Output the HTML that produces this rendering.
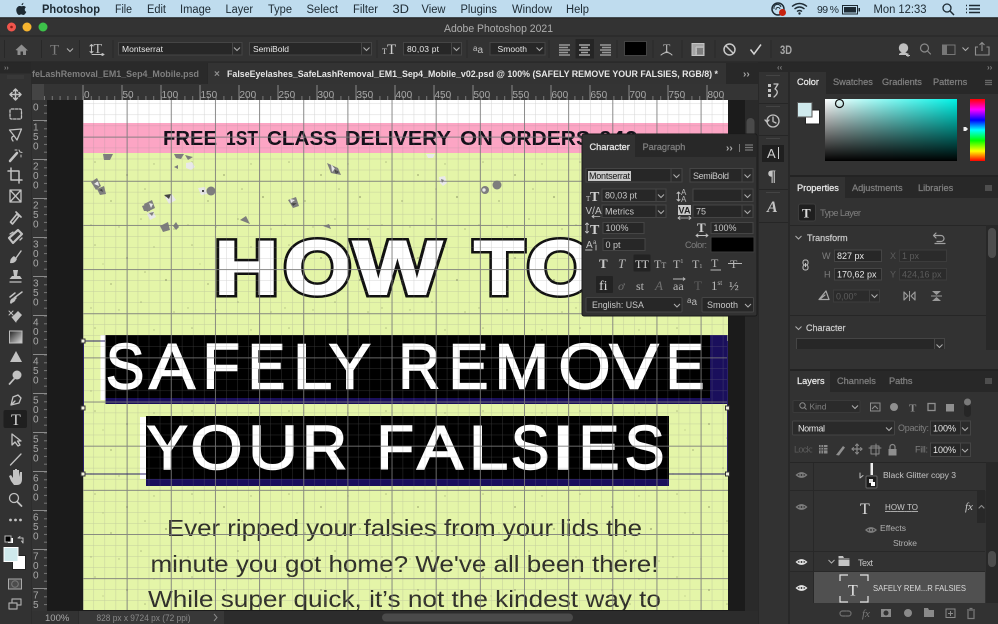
<!DOCTYPE html>
<html lang="en"><head><meta charset="utf-8"><title>Adobe Photoshop 2021</title>
<style>
html,body{margin:0;padding:0;background:#323232;width:998px;height:624px;overflow:hidden}
svg{display:block;position:absolute;left:0;top:0}
text{font-family:"Liberation Sans",sans-serif;font-size:9px;fill:#c4c4c4}
.b{font-weight:bold}
.d{fill:#7f7f7f}
.dd{fill:#5c5c5c}
.w{fill:#e8e8e8}
.m{font-size:11.5px;fill:#1d2a33}
.r{font-size:10px;fill:#a8a8a8}
.f{fill:#272727;stroke:#454545;stroke-width:1}
.s{fill:#2b2b2b;stroke:#454545}
.i{fill:none;stroke:#c2c2c2;stroke-width:1.3;stroke-linecap:round;stroke-linejoin:round}
.id{fill:none;stroke:#8a8a8a;stroke-width:1.2;stroke-linecap:round;stroke-linejoin:round}
.fl{fill:#c2c2c2}
.fd{fill:#8a8a8a}
.g{fill:#7d7d7d}
.gl{fill:#e9e9e9}
.gd{fill:#444}
.tw{fill:#e8e8e8;stroke:#e8e8e8;stroke-width:.25px;font-size:9.2px}
.td{fill:#7f7f7f;stroke:#7f7f7f;stroke-width:.25px;font-size:9.2px}
.big{fill:#fff;stroke:#fff;stroke-width:1.5px;font-size:64px}
.big2{fill:#fff;stroke:#fff;stroke-width:1.5px;font-size:62px}
.hb{font-size:76px;font-weight:bold;fill:#111;stroke:#111;stroke-width:7px;stroke-linejoin:miter}
.hf{font-size:76px;font-weight:bold;fill:#fff;stroke:#fff;stroke-width:2px;stroke-linejoin:miter}
.fs{font-size:20.5px;font-weight:bold;fill:#14101a}
.bd{font-size:23px;fill:#30302a}
</style></head><body>
<svg width="998" height="624" viewBox="0 0 998 624" xmlns="http://www.w3.org/2000/svg">
<defs>
<path id="c" d="M-3 -1.5L0 1.5L3 -1.5" fill="none" stroke="#b0b0b0" stroke-width="1"/>
<pattern id="minor" x="82.5" y="92.5" width="11.04" height="11.04" patternUnits="userSpaceOnUse"><path d="M0 0H11.04M0 0V11.04" stroke="#8c8c8c" stroke-opacity=".36" stroke-width="1" fill="none"/></pattern>
<pattern id="major" x="82.5" y="92.5" width="44.15" height="44.15" patternUnits="userSpaceOnUse"><path d="M0 .5H44.15M.5 0V44.15" stroke="#777" stroke-opacity=".82" stroke-width="1" fill="none"/></pattern>
<pattern id="speck" x="83" y="153" width="97" height="83" patternUnits="userSpaceOnUse"><g fill="#8f9a68" fill-opacity=".6"><circle cx="12" cy="9" r=".8"/><circle cx="44" cy="22" r="1"/><circle cx="71" cy="11" r=".7"/><circle cx="28" cy="48" r=".9"/><circle cx="83" cy="44" r="1.1"/><circle cx="58" cy="66" r=".8"/><circle cx="8" cy="72" r=".7"/><circle cx="91" cy="76" r=".8"/><circle cx="36" cy="74" r=".7"/><circle cx="62" cy="36" r=".8"/><circle cx="20" cy="28" r=".6"/></g></pattern>
<pattern id="htick" x="83" y="0" width="7.8" height="100" patternUnits="userSpaceOnUse"><path d="M.5 96V100" stroke="#777"/></pattern>
<pattern id="vtick" x="0" y="120.5" width="48" height="7.8" patternUnits="userSpaceOnUse"><path d="M44 .5H48" stroke="#777"/></pattern>
<linearGradient id="gh" x1="0" x2="1" y1="0" y2="0"><stop offset="0" stop-color="#fff"/><stop offset="1" stop-color="#00f2e6"/></linearGradient>
<linearGradient id="gv" x1="0" x2="0" y1="0" y2="1"><stop offset="0" stop-color="#000" stop-opacity="0"/><stop offset="1" stop-color="#000"/></linearGradient>
<linearGradient id="hue" x1="0" x2="0" y1="0" y2="1"><stop offset="0" stop-color="#f00"/><stop offset=".17" stop-color="#f0f"/><stop offset=".34" stop-color="#00f"/><stop offset=".5" stop-color="#0ff"/><stop offset=".67" stop-color="#0f0"/><stop offset=".84" stop-color="#ff0"/><stop offset="1" stop-color="#f00"/></linearGradient>
<linearGradient id="tg" x1="0" x2="1" y1="0" y2="1"><stop offset="0" stop-color="#222"/><stop offset="1" stop-color="#ddd"/></linearGradient>
<clipPath id="cv"><rect x="83" y="100" width="645" height="510"/></clipPath>
<path id="eye" d="M-5 0Q0 -4.5 5 0Q0 4.5 -5 0Z M-1.6 0A1.6 1.6 0 1 0 1.6 0A1.6 1.6 0 1 0 -1.6 0Z" fill="none" stroke-width="1.3"/>
</defs>

<!-- window -->
<rect width="998" height="624" fill="#323232"/>
<!-- menu bar -->
<rect width="998" height="17.5" fill="#bfdcee"/>
<path d="M21.5 4.2Q22.5 3.2 23.4 2.8Q23.5 4.2 22.6 5Q21.8 5.5 21.5 4.2ZM17.2 7.4C18.8 5.3 20.7 6.2 21.6 6.2C22.5 6.2 24.3 5.2 25.9 7.2C24.2 8.4 24.4 11 26.3 11.9C25.6 13.5 24.4 15.2 23.2 15C22.4 14.9 22 14.4 21.2 14.4C20.4 14.4 20 15 19.1 15C17.3 15 15 9.9 17.2 7.4Z" fill="#1d2a33"/>
<text class="m b" x="42" y="13" textLength="58" lengthAdjust="spacingAndGlyphs">Photoshop</text>
<text class="m" x="115" y="13" textLength="17" lengthAdjust="spacingAndGlyphs">File</text>
<text class="m" x="147" y="13" textLength="19" lengthAdjust="spacingAndGlyphs">Edit</text>
<text class="m" x="180" y="13" textLength="31" lengthAdjust="spacingAndGlyphs">Image</text>
<text class="m" x="225.5" y="13" textLength="27.5" lengthAdjust="spacingAndGlyphs">Layer</text>
<text class="m" x="268" y="13" textLength="24" lengthAdjust="spacingAndGlyphs">Type</text>
<text class="m" x="306.5" y="13" textLength="31.5" lengthAdjust="spacingAndGlyphs">Select</text>
<text class="m" x="353" y="13" textLength="25" lengthAdjust="spacingAndGlyphs">Filter</text>
<text class="m" x="392.5" y="13" textLength="16.5" lengthAdjust="spacingAndGlyphs">3D</text>
<text class="m" x="421.5" y="13" textLength="24" lengthAdjust="spacingAndGlyphs">View</text>
<text class="m" x="460.5" y="13" textLength="36.5" lengthAdjust="spacingAndGlyphs">Plugins</text>
<text class="m" x="512" y="13" textLength="40" lengthAdjust="spacingAndGlyphs">Window</text>
<text class="m" x="566" y="13" textLength="23" lengthAdjust="spacingAndGlyphs">Help</text>
<circle cx="778" cy="9" r="6" fill="none" stroke="#1d2a33" stroke-width="1.5"/><path d="M774 9A3.5 3.5 0 0 1 781 7M776 10A2 2 0 0 1 780 9" fill="none" stroke="#1d2a33"/>
<circle cx="782.5" cy="12.5" r="3.5" fill="#c8220f"/>
<path d="M792 6.5Q799.5 .5 807 6.5M794.5 9Q799.5 5 804.5 9M797 11.5Q799.5 9.5 802 11.5" fill="none" stroke="#1d2a33" stroke-width="1.4"/><circle cx="799.5" cy="13.5" r="1.2" fill="#1d2a33"/>
<text class="m" style="font-size:10.5px" x="817" y="13" textLength="22">99 %</text>
<rect x="842.5" y="5.5" width="15" height="8.5" fill="none" stroke="#1d2a33"/><rect x="844" y="7" width="12" height="5.5" fill="#1d2a33"/><rect x="858.5" y="8" width="1.5" height="3.5" fill="#1d2a33"/>
<text class="m" x="873.5" y="13" textLength="53" lengthAdjust="spacingAndGlyphs">Mon 12:33</text>
<circle cx="947" cy="8" r="4" fill="none" stroke="#1d2a33" stroke-width="1.3"/><path d="M950 11L954 15" stroke="#1d2a33" stroke-width="1.5"/>
<path d="M969 5.5H980M969 9H980M969 12.5H980M966 5.5H967M966 9H967M966 12.5H967" stroke="#1d2a33" stroke-width="1.4"/>

<!-- title bar -->
<rect x="0" y="18" width="998" height="18" rx="4" fill="#333"/>
<path d="M0 17.8H998" stroke="#1c1c1c"/>
<circle cx="11.5" cy="27" r="4.5" fill="#f0554c"/><circle cx="11.5" cy="27" r="1.3" fill="#8a1d16"/>
<circle cx="27" cy="27" r="4.5" fill="#f6b42f"/>
<circle cx="43" cy="27" r="4.5" fill="#3dc24a"/>
<text x="444" y="32" style="font-size:11px;fill:#aeaeae" textLength="109" lengthAdjust="spacingAndGlyphs">Adobe Photoshop 2021</text>
<!-- options bar -->
<path d="M0 36H998" stroke="#262626"/>
<rect y="36.5" width="998" height="26" fill="#333"/>
<path d="M0 62H998" stroke="#262626"/>
<path d="M4.5 40V58M41.5 40V58M79.5 40V58M113 40V58M377 40V58M467 40V58M549 40V58M617 40V58M653 40V58M682 40V58M715 40V58M771 40V58" stroke="#282828"/>
<path d="M15.5 50L21.5 44.5L28 50.5H26V55H23V51.5H20.5V55H17.5V50.5Z" fill="#8e8e8e"/>
<text x="50" y="54.5" style="font-size:15px;fill:#7e7e7e;font-family:'Liberation Serif',serif">T</text>
<use href="#c" x="70" y="50"/>
<text x="93.5" y="53" style="font-size:14px;fill:#c0c0c0;font-family:'Liberation Serif',serif">T</text>
<path d="M91.5 44.5V53M90 46L91.5 44.5L93 46M90 51.5L91.5 53L93 51.5M92 54.5H103M102 53.5L104 54.5L102 55.5" class="i" style="stroke-width:1"/>
<rect class="f" x="118.5" y="42.5" width="114" height="12.5"/><rect class="s" x="232.5" y="42.5" width="9.5" height="12.5"/><use href="#c" x="237" y="49"/>
<text class="w" x="122" y="52" style="font-size:8.5px" textLength="41">Montserrat</text>
<rect class="f" x="249.5" y="42.5" width="112" height="12.5"/><rect class="s" x="361.5" y="42.5" width="10" height="12.5"/><use href="#c" x="366.5" y="49"/>
<text class="w" x="253" y="52" style="font-size:8.5px" textLength="36">SemiBold</text>
<text x="387" y="54" style="font-size:15px;fill:#d0d0d0;font-family:'Liberation Serif',serif">T</text><text x="382" y="54" style="font-size:8px;fill:#d0d0d0;font-family:'Liberation Serif',serif">T</text>
<rect class="f" x="403.5" y="42.5" width="48" height="12.5"/><rect class="s" x="451.5" y="42.5" width="10" height="12.5"/><use href="#c" x="456.5" y="49"/>
<text class="w" x="407" y="52" style="font-size:8.5px" textLength="32">80,03 pt</text>
<text x="473" y="51" style="font-size:8px;fill:#c0c0c0">a</text><text x="477.5" y="53" style="font-size:10px;fill:#c0c0c0">a</text>
<rect class="f" x="490" y="42.5" width="55" height="12.5"/><use href="#c" x="539.5" y="49"/>
<text class="w" x="497.5" y="52" style="font-size:8.5px" textLength="29.5">Smooth</text>
<path d="M559 45H570M559 47.5H568M559 50H570M559 52.5H568M559 55H570" stroke="#9a9a9a" stroke-width="1.4"/>
<rect x="575.5" y="39" width="18.5" height="19.5" fill="#252525"/>
<path d="M579 45H590M581 47.5H588M579 50H590M581 52.5H588M579 55H590" stroke="#a5a5a5" stroke-width="1.4"/>
<path d="M600 45H611M602 47.5H611M600 50H611M602 52.5H611M600 55H611" stroke="#9a9a9a" stroke-width="1.4"/>
<rect x="624.5" y="41.5" width="22" height="14" fill="#000" stroke="#444"/>
<text x="663" y="52" style="font-size:12px;fill:#bcbcbc;font-family:'Liberation Serif',serif">T</text><path d="M661 55Q667 50 672 55" class="i" style="stroke-width:1"/>
<path d="M692 43.5H704V55.5H692ZM692 43.5V46M696 47H704M696 47V55.5M696 50H704M696 53H704" fill="#a5a5a5" stroke="#c4c4c4" stroke-width="1"/><rect x="697" y="48" width="6" height="6.5" fill="#7e7e7e"/>
<circle cx="729.5" cy="49.5" r="5.5" fill="none" stroke="#c8c8c8" stroke-width="1.5"/><path d="M725.5 45.5L733.5 53.5" stroke="#c8c8c8" stroke-width="1.5"/>
<path d="M750.5 49.5L754 54L761 44.5" fill="none" stroke="#d4d4d4" stroke-width="1.5"/>
<text x="780" y="54" style="font-size:12px;fill:#a8a8a8;font-weight:bold" textLength="12" lengthAdjust="spacingAndGlyphs">3D</text>
<circle cx="903.5" cy="48" r="4.7" fill="#c0c0c0"/><path d="M899 54Q903.5 50 908 54V55H899Z" fill="#c0c0c0"/><path d="M908 53.5V57M906 55.5H910" stroke="#c0c0c0"/>
<circle cx="924.5" cy="48" r="4" class="id"/><path d="M927.5 51L930.5 54" class="id"/>
<rect x="942.5" y="45" width="12.5" height="9.5" fill="none" stroke="#777"/><rect x="943" y="45.5" width="4" height="8.5" fill="#777"/>
<use href="#c" x="965.5" y="49"/>
<path d="M978 47H975.5V55H989V47H986.5M982 51V43M979.5 45L982 42.5L984.5 45" fill="none" stroke="#8f8f8f" stroke-width="1.1"/>

<!-- document area -->
<rect x="0" y="62.5" width="758" height="562" fill="#2d2d2d"/>
<rect x="0" y="62.5" width="31" height="562" fill="#323232"/>
<rect x="0" y="62.5" width="31" height="11" fill="#282828"/>
<text x="4" y="70" class="d" style="font-size:7px;font-weight:bold">››</text>
<path d="M7 76H24M7 78H24" stroke="#3f3f3f"/>
<!-- tabs -->
<rect x="31.5" y="63" width="727" height="21" fill="#282828"/>
<rect x="32" y="63" width="175" height="21" fill="#2a2a2a"/>
<text class="b" x="32" y="77" style="font-size:9.5px;fill:#7f7f7f" textLength="167" lengthAdjust="spacingAndGlyphs">feLashRemoval_EM1_Sep4_Mobile.psd</text>
<rect x="208" y="63" width="518" height="21" fill="#333"/>
<text class="b" x="214" y="77" style="font-size:10px;fill:#8f8f8f">×</text>
<text class="b" x="227" y="77" style="font-size:9.5px;fill:#e6e6e6" textLength="491" lengthAdjust="spacingAndGlyphs">FalseEyelashes_SafeLashRemoval_EM1_Sep4_Mobile_v02.psd @ 100% (SAFELY REMOVE YOUR FALSIES, RGB/8) *</text>
<text class="b" x="743" y="77" style="font-size:10px;fill:#a8a8a8">››</text>
<!-- rulers -->
<rect x="32" y="84" width="726" height="16" fill="#343434"/>
<rect x="32" y="84" width="12" height="16" fill="#444"/>
<rect x="32" y="100" width="15" height="511" fill="#343434"/>
<rect x="44" y="84" width="684" height="16" fill="url(#htick)"/>
<rect x="32" y="100" width="15" height="510" fill="url(#vtick)"/>
<g stroke="#8a8a8a"><path d="M83 85V100M122 85V100M161 85V100M200 85V100M239 85V100M278 85V100M317 85V100M356 85V100M395 85V100M434 85V100M473 85V100M512 85V100M551 85V100M590 85V100M629 85V100M668 85V100M707 85V100"/>
<path d="M33 120.5H47M33 159.5H47M33 198.5H47M33 237.5H47M33 276.5H47M33 315.5H47M33 354.5H47M33 393.5H47M33 432.5H47M33 471.5H47M33 510.5H47M33 549.5H47M33 588.5H47"/></g>
<g>
<text class="r" x="84" y="98">0</text><text class="r" x="122.5" y="98">50</text><text class="r" x="161.5" y="98">100</text><text class="r" x="200.5" y="98">150</text><text class="r" x="239.5" y="98">200</text><text class="r" x="278.5" y="98">250</text><text class="r" x="317.5" y="98">300</text><text class="r" x="356.5" y="98">350</text><text class="r" x="395.5" y="98">400</text><text class="r" x="434.5" y="98">450</text><text class="r" x="473.5" y="98">500</text><text class="r" x="512.5" y="98">550</text><text class="r" x="551.5" y="98">600</text><text class="r" x="590.5" y="98">650</text><text class="r" x="629.5" y="98">700</text><text class="r" x="668.5" y="98">750</text><text class="r" x="707.5" y="98">800</text>
</g>
<g>
<text class="r" x="33" y="110.5">0</text>
<text class="r" x="33" y="130.5">1</text><text class="r" x="33" y="140">5</text><text class="r" x="33" y="149.5">0</text>
<text class="r" x="33" y="169.5">2</text><text class="r" x="33" y="179">0</text><text class="r" x="33" y="188.5">0</text>
<text class="r" x="33" y="208.5">2</text><text class="r" x="33" y="218">5</text><text class="r" x="33" y="227.5">0</text>
<text class="r" x="33" y="247.5">3</text><text class="r" x="33" y="257">0</text><text class="r" x="33" y="266.5">0</text>
<text class="r" x="33" y="286.5">3</text><text class="r" x="33" y="296">5</text><text class="r" x="33" y="305.5">0</text>
<text class="r" x="33" y="325.5">4</text><text class="r" x="33" y="335">0</text><text class="r" x="33" y="344.5">0</text>
<text class="r" x="33" y="364.5">4</text><text class="r" x="33" y="374">5</text><text class="r" x="33" y="383.5">0</text>
<text class="r" x="33" y="403.5">5</text><text class="r" x="33" y="413">0</text><text class="r" x="33" y="422.5">0</text>
<text class="r" x="33" y="442.5">5</text><text class="r" x="33" y="452">5</text><text class="r" x="33" y="461.5">0</text>
<text class="r" x="33" y="481.5">6</text><text class="r" x="33" y="491">0</text><text class="r" x="33" y="500.5">0</text>
<text class="r" x="33" y="520.5">6</text><text class="r" x="33" y="530">5</text><text class="r" x="33" y="539.5">0</text>
<text class="r" x="33" y="559.5">7</text><text class="r" x="33" y="569">0</text><text class="r" x="33" y="578.5">0</text>
<text class="r" x="33" y="598.5">7</text><text class="r" x="33" y="608">5</text>
</g>
<!-- pasteboard -->
<rect x="47" y="100" width="711" height="511" fill="#1b1b1b"/>
<!-- vertical scrollbar -->
<rect x="745" y="100" width="13" height="511" fill="#2a2a2a"/>
<rect x="746.5" y="118" width="8" height="160" rx="4" fill="#4a4a4a"/>
<!-- canvas -->
<g clip-path="url(#cv)">
<rect x="83" y="100" width="645" height="23" fill="#fff"/>
<rect x="83" y="123" width="645" height="30" fill="#fca5c4"/>
<rect x="83" y="153" width="645" height="458" fill="#e4f5a8"/>
<rect x="83" y="153" width="645" height="458" fill="url(#speck)"/>
<!-- glitter -->
<g>
<path class="g" d="M103 154H113L110 160H104Z"/>
<path class="g" d="M91 182L97 178L101 186L96 190Z"/><path class="gl" d="M94 184L98 181L99 186Z"/><path class="g" d="M97 189L104 186L106 194L100 195Z"/><path class="gd" d="M99 190L102 189L103 192Z"/>
<path class="g" d="M174 154H184L181 159L176 158Z"/><path class="gl" d="M186 163L192 162L195 167L191 170L186 168Z"/>
<path class="g" d="M144 204L152 200L155 208L147 212Z"/><path class="gl" d="M149 203L153 204L151 208Z"/><path class="g" d="M142 206L148 204L150 211L144 211Z"/><path class="gl" d="M147 214L153 211L156 217L150 220Z"/><path class="g" d="M149 213L154 212L152 216Z"/>
<path class="gl" d="M165 197L172 194L176 200L169 204Z"/><path class="gd" d="M164 195L171 194L169 199Z"/>
<circle class="g" cx="211" cy="191" r="4.5"/><path class="gl" d="M198 188L205 187L207 194L201 195Z"/><path class="gd" d="M202 190H204V192H202Z"/>
<path class="g" d="M174 167L178 165V169Z"/><path class="g" d="M173 226L176 222L179 227L176 230ZM160 226L168 222L170 230L163 232Z"/>
<path class="g" d="M327 163L338 168L341 175L331 173Z"/><path class="gl" d="M331 164L335 169L332 172Z"/><path class="gd" d="M334 169L339 172L336 174Z"/>
<path class="gl" d="M426 154H435L433 158H428Z"/>
<path class="gl" d="M439 177L445 176L447 183L443 186L440 183Z"/><path class="g" d="M441 179L444 180L442 183Z"/>
<circle class="g" cx="485" cy="190" r="4"/><circle class="gl" cx="484" cy="190" r="1.7"/><circle class="g" cx="497" cy="185" r="4.5"/>
<path class="g" d="M288 200L296 197L299 206L293 208Z"/><path class="gl" d="M290 199L295 200L291 203Z"/><path class="gd" d="M291 203L297 203L293 206Z"/>
<path class="g" d="M323 226L329 224L331 229Z"/>
<path class="g" d="M240 220L246 216L250 224ZM185 155L193 157L188 160Z"/>
</g>
<!-- free shipping -->
<text class="fs" x="163" y="145" textLength="54" lengthAdjust="spacingAndGlyphs">FREE</text>
<text class="fs" x="226" y="145" textLength="32" lengthAdjust="spacingAndGlyphs">1ST</text>
<text class="fs" x="267" y="145" textLength="70" lengthAdjust="spacingAndGlyphs">CLASS</text>
<text class="fs" x="345" y="145" textLength="106" lengthAdjust="spacingAndGlyphs">DELIVERY</text>
<text class="fs" x="460" y="145" textLength="33" lengthAdjust="spacingAndGlyphs">ON</text>
<text class="fs" x="500" y="145" textLength="90" lengthAdjust="spacingAndGlyphs">ORDERS</text>
<text class="fs" x="598" y="145" textLength="40" lengthAdjust="spacingAndGlyphs">£40</text>
<!-- HOW TO -->
<text class="hb" x="214.5" y="294" textLength="64" lengthAdjust="spacingAndGlyphs">H</text>
<text class="hb" x="284" y="294" textLength="67" lengthAdjust="spacingAndGlyphs">O</text>
<text class="hb" x="353" y="294" textLength="89" lengthAdjust="spacingAndGlyphs">W</text>
<text class="hb" x="474" y="294" textLength="50" lengthAdjust="spacingAndGlyphs">T</text>
<text class="hb" x="527" y="294" textLength="67" lengthAdjust="spacingAndGlyphs">O</text>
<text class="hf" x="214.5" y="294" textLength="64" lengthAdjust="spacingAndGlyphs">H</text>
<text class="hf" x="284" y="294" textLength="67" lengthAdjust="spacingAndGlyphs">O</text>
<text class="hf" x="353" y="294" textLength="89" lengthAdjust="spacingAndGlyphs">W</text>
<text class="hf" x="474" y="294" textLength="50" lengthAdjust="spacingAndGlyphs">T</text>
<text class="hf" x="527" y="294" textLength="67" lengthAdjust="spacingAndGlyphs">O</text>
<!-- headline bars -->
<rect x="100.5" y="335" width="5" height="65" fill="#fff"/>
<rect x="105.5" y="335" width="622" height="69" fill="#1a0f5c"/>
<rect x="105.5" y="335" width="604.5" height="63" fill="#000"/>
<rect x="728" y="335" width="3" height="70" fill="#fff"/>
<text class="big" x="105.7" y="388.5" textLength="38.6" lengthAdjust="spacingAndGlyphs">S</text>
<text class="big" x="149" y="388.5" textLength="46" lengthAdjust="spacingAndGlyphs">A</text>
<text class="big" x="202.5" y="388.5" textLength="37.5" lengthAdjust="spacingAndGlyphs">F</text>
<text class="big" x="247.9" y="388.5" textLength="37.3" lengthAdjust="spacingAndGlyphs">E</text>
<text class="big" x="292.6" y="388.5" textLength="39.7" lengthAdjust="spacingAndGlyphs">L</text>
<text class="big" x="328.6" y="388.5" textLength="42.3" lengthAdjust="spacingAndGlyphs">Y</text>
<text class="big" x="398.4" y="388.5" textLength="41.7" lengthAdjust="spacingAndGlyphs">R</text>
<text class="big" x="448.6" y="388.5" textLength="39.8" lengthAdjust="spacingAndGlyphs">E</text>
<text class="big" x="494.5" y="388.5" textLength="54.7" lengthAdjust="spacingAndGlyphs">M</text>
<text class="big" x="558.4" y="388.5" textLength="52.2" lengthAdjust="spacingAndGlyphs">O</text>
<text class="big" x="609.5" y="388.5" textLength="49" lengthAdjust="spacingAndGlyphs">V</text>
<text class="big" x="665.8" y="388.5" textLength="38.6" lengthAdjust="spacingAndGlyphs">E</text>
<rect x="140" y="417" width="6" height="62" fill="#fff"/>
<rect x="146" y="416" width="523" height="70" fill="#1a0f5c"/>
<rect x="146" y="416" width="523" height="63" fill="#000"/>
<text class="big2" x="146.6" y="469" textLength="41.2" lengthAdjust="spacingAndGlyphs">Y</text>
<text class="big2" x="190.4" y="469" textLength="52.2" lengthAdjust="spacingAndGlyphs">O</text>
<text class="big2" x="248" y="469" textLength="50" lengthAdjust="spacingAndGlyphs">U</text>
<text class="big2" x="302" y="469" textLength="45.2" lengthAdjust="spacingAndGlyphs">R</text>
<text class="big2" x="376.5" y="469" textLength="37.5" lengthAdjust="spacingAndGlyphs">F</text>
<text class="big2" x="417" y="469" textLength="46" lengthAdjust="spacingAndGlyphs">A</text>
<text class="big2" x="468.6" y="469" textLength="39.7" lengthAdjust="spacingAndGlyphs">L</text>
<text class="big2" x="510.7" y="469" textLength="38.6" lengthAdjust="spacingAndGlyphs">S</text>
<text class="big2" x="550.5" y="469" textLength="25.7" lengthAdjust="spacingAndGlyphs">I</text>
<text class="big2" x="578.5" y="469" textLength="41" lengthAdjust="spacingAndGlyphs">E</text>
<text class="big2" x="624.6" y="469" textLength="39.8" lengthAdjust="spacingAndGlyphs">S</text>
<!-- body -->
<text class="bd" x="167" y="536" textLength="475" lengthAdjust="spacingAndGlyphs">Ever ripped your falsies from your lids the</text>
<text class="bd" x="150.5" y="572" textLength="508" lengthAdjust="spacingAndGlyphs">minute you got home? We've all been there!</text>
<text class="bd" x="148" y="607" textLength="513" lengthAdjust="spacingAndGlyphs">While super quick, it’s not the kindest way to</text>
<!-- grid -->
<rect x="83" y="100" width="645" height="510" fill="url(#minor)"/>
<rect x="83" y="100" width="645" height="510" fill="url(#major)"/>
</g>
<!-- selection box -->
<path d="M83.5 341V474M727.5 341V474M83.5 341H105M146 474H83.5M669 474H727.5" stroke="#2b2268" stroke-width="1" fill="none"/>
<g fill="#f0f0e0" stroke="#333"><rect x="81" y="339" width="4" height="4"/><rect x="81" y="406" width="4" height="4"/><rect x="81" y="472" width="4" height="4"/><rect x="725.5" y="406" width="4" height="4"/><rect x="725.5" y="472" width="4" height="4"/></g>
<!-- status bar -->
<rect x="0" y="611" width="758" height="13" fill="#2c2c2c"/>
<rect x="0" y="611" width="31" height="13" fill="#323232"/>
<rect x="32" y="611" width="46" height="13" fill="#323232"/>
<rect x="79" y="611" width="145" height="13" fill="#383838"/>
<text x="45" y="621" style="font-size:9.5px;fill:#a8a8a8">100%</text>
<text x="96.5" y="621" style="font-size:9px;fill:#8a8a8a" textLength="94" lengthAdjust="spacingAndGlyphs">828 px x 9724 px (72 ppi)</text>
<path d="M214 614L217 617.5L214 621" fill="none" stroke="#8a8a8a"/>
<rect x="382" y="613.5" width="191" height="8" rx="4" fill="#4a4a4a"/>

<!-- Tools -->
<g>
<path class="i" d="M15.5 89V100M10 94.5H21M13.5 91L15.5 89L17.5 91M13.5 98L15.5 100L17.5 98M12 92.5L10 94.5L12 96.5M19 92.5L21 94.5L19 96.5" style="stroke-width:1.5"/>
<rect class="i" x="10" y="109" width="11.5" height="10" rx="1.5" stroke-dasharray="2.5 1.5"/>
<path class="i" d="M9.5 130L21.5 129L17 140L13.5 135ZM14 136Q10 137 13 141"/>
<path class="i" d="M10 161L17 153" style="stroke-width:2.5"/><path class="i" d="M19 150L20 152L22 152.5M15 150H17M21 155V157" style="stroke-width:1"/>
<path class="i" d="M11 168V180H22M8 171H19V183" style="stroke-width:1.5"/>
<path class="i" d="M10 190H21V202H10ZM10 190L21 202M21 190L10 202"/>
<path class="i" d="M10.5 222L17 214L19 216L12.5 224ZM16 212L21 217" style="stroke-width:1.7"/>
<path class="i" d="M9 238L18 230L22 234L13 243Z" style="stroke-width:2.2"/><path class="i" d="M13 232L10 234M20 240L22 238"/>
<path class="i" d="M16 258L21 251" style="stroke-width:1.4"/><path class="fl" d="M10 263Q10 258 14 256L17 259Q15 264 10 263Z"/>
<path class="fl" d="M13 270H18L17 276H20L22 279H9.5L12 276H14Z"/><path class="i" d="M10 282H21" style="stroke-width:1.3"/>
<path class="i" d="M14 298L22 292M10 297L15 293M11 303L16 298" style="stroke-width:1.5"/><path class="fl" d="M10 303Q10 299 13 298L15.5 300Q14 303 10 303Z"/>
<path class="fl" d="M12 317L18 311L22 315L16 322Z"/><path class="i" d="M9 311L13 315M13 311L9 315M12 317L16 322" style="stroke-width:1"/>
<rect x="9.5" y="331" width="12.5" height="12" fill="url(#tg)" stroke="#bdbdbd"/>
<path class="fl" d="M16 351L22 362H10Z"/>
<circle class="fl" cx="17" cy="375" r="4.5"/><path class="i" d="M14 379L9.5 384" style="stroke-width:1.7"/>
<path class="i" d="M11 405L13 397L18 395L21 398L19 403ZM11 405L15 401"/>
<rect x="3.5" y="410" width="23.5" height="18" rx="2" fill="#1f1f1f" stroke="none"/>
<text x="11" y="425" style="font-size:16px;fill:#d4d4d4;font-family:'Liberation Serif',serif">T</text>
<path class="i" d="M12 434L12 445L15 442L18 446L20 445L17.5 441L21 441Z"/>
<path class="i" d="M10.5 465L21 454"/>
<path class="fl" d="M11 481L9 476L11 475L13 478V470H15V476V469H17V476V470H19V477L20 472H22V479Q22 485 17 485H14Z"/>
<circle class="i" cx="14" cy="498" r="4.5"/><path class="i" d="M17.5 502L21.5 506" style="stroke-width:1.8"/>
<circle class="fl" cx="10.5" cy="520" r="1.4"/><circle class="fl" cx="15.5" cy="520" r="1.4"/><circle class="fl" cx="20.5" cy="520" r="1.4"/>
<rect x="8" y="538" width="5" height="5" fill="#fff" stroke="none"/><rect x="5" y="536" width="6" height="6" fill="#000" stroke="#bbb"/>
<path class="i" d="M18 538H23V543M18 538L20 536.5M23 543L21.5 541" style="stroke-width:1"/>
</g>
<rect x="12.5" y="555.5" width="13" height="14" fill="#fff" stroke="#222"/>
<rect x="4" y="547.5" width="14" height="14" fill="#cfe9ec" stroke="#fff"/>
<rect x="8.5" y="579" width="13" height="10" fill="none" stroke="#aaa"/><circle cx="15" cy="584" r="3.3" fill="none" stroke="#aaa"/><rect x="9" y="579.5" width="12" height="9" fill="#5c5c5c" opacity=".6"/>
<path class="id" d="M9 603H17V609H9ZM12 603V599H21V605H17" style="stroke:#aaa"/>

<!-- Dock -->
<rect x="758" y="62.5" width="240" height="562" fill="#282828"/>
<rect x="759" y="72" width="29" height="552" fill="#323232"/>
<path d="M759 103.5H788M759 135.5H788M759 189.5H788M759 222.5H788" stroke="#262626"/>
<text x="777" y="70" class="d" style="font-size:8px;font-weight:bold">‹‹</text>
<text x="987" y="70" class="d" style="font-size:8px;font-weight:bold">››</text>
<g fill="#444"><rect x="766" y="75" width="14" height="1"/><rect x="766" y="106" width="14" height="1"/><rect x="766" y="138" width="14" height="1"/><rect x="766" y="192" width="14" height="1"/></g>
<path d="M768 84H771V87H768ZM768 89H771V92H768ZM768 94H771V97H768Z" fill="#c4c4c4"/><path d="M774 84H778L775 89Q780 92 774 97" class="i"/>
<circle class="i" cx="773" cy="121" r="6"/><path class="i" d="M773 117V121.5L776 123M765 120L767 122L769 120"/>
<rect x="762" y="145" width="22" height="17" fill="#1f1f1f"/>
<text x="767" y="158" style="font-size:13px;fill:#d0d0d0">A</text><path d="M778.5 147V159" stroke="#d0d0d0"/>
<text x="767.5" y="181" style="font-size:16px;fill:#c4c4c4;font-family:'Liberation Serif',serif;font-weight:bold">¶</text>
<text x="767" y="212" style="font-size:16px;fill:#c4c4c4;font-family:'Liberation Serif',serif;font-style:italic;font-weight:bold">A</text>

<!-- Right panels -->
<rect x="790" y="72" width="208" height="552" fill="#323232"/>
<!-- color panel -->
<rect x="790" y="72" width="208" height="22" fill="#282828"/>
<rect x="790" y="72" width="36" height="22" fill="#323232"/>
<text class="tw" x="797" y="85">Color</text>
<text class="td" x="833" y="85">Swatches</text>
<text class="td" x="882" y="85">Gradients</text>
<text class="td" x="933" y="85">Patterns</text>
<path d="M985 80.5H992M985 82.5H992M985 84.5H992" stroke="#666" stroke-width="1.2"/>
<rect x="805.5" y="110" width="14" height="14" fill="#fff" stroke="#222"/>
<rect x="797.5" y="102.5" width="14.5" height="14.5" fill="#cfe9ec" stroke="#555"/>
<rect x="825" y="99" width="132" height="62" fill="url(#gh)"/>
<rect x="825" y="99" width="132" height="62" fill="url(#gv)"/>
<circle cx="839.5" cy="103.5" r="4" fill="none" stroke="#111" stroke-width="1.2"/>
<rect x="970" y="99" width="15" height="62" fill="url(#hue)"/>
<path d="M963.5 127H966L968 129L966 131H963.5Z" fill="#eee"/>
<rect x="790" y="175" width="208" height="2" fill="#232323"/>
<!-- properties -->
<rect x="790" y="177" width="208" height="21" fill="#282828"/>
<rect x="790" y="177" width="55" height="21" fill="#323232"/>
<text class="tw" x="797" y="191">Properties</text>
<text class="td" x="852" y="191">Adjustments</text>
<text class="td" x="918" y="191">Libraries</text>
<path d="M985 186H992M985 188H992M985 190H992" stroke="#666" stroke-width="1.2"/>
<rect x="798.5" y="204" width="17" height="17" rx="2" fill="#1f1f1f" stroke="#3d3d3d"/>
<text x="802" y="217.5" style="font-size:13px;font-weight:bold;fill:#ddd;font-family:'Liberation Serif',serif">T</text>
<text class="d" x="820" y="216" style="font-size:9.5px" textLength="41">Type Layer</text>
<path d="M790 225.5H986M790 315.5H986" stroke="#262626"/>
<rect x="986" y="225" width="12" height="125" fill="#282828"/>
<rect x="988" y="228" width="8" height="30" rx="4" fill="#4d4d4d"/>
<use href="#c" x="798.5" y="237.5"/>
<text x="807" y="241" style="font-size:9px;fill:#c8c8c8;stroke:#c8c8c8;stroke-width:.25px">Transform</text>
<path d="M936 233L933.5 235.5L936 238M934 235.5H941A3 3 0 0 1 941 241.5H937M935 243.5H945" class="id" style="stroke:#a0a0a0"/>
<text class="d" x="822" y="259" style="font-size:9px">W</text>
<rect class="f" x="834.5" y="250" width="47" height="11.5"/>
<text class="w" x="837" y="259" style="font-size:9px">827 px</text>
<text class="dd" x="890" y="259" style="font-size:9px">X</text>
<rect x="899.5" y="250" width="47" height="11.5" fill="#2b2b2b" stroke="#3c3c3c"/>
<text class="dd" x="902" y="259" style="font-size:9px">1 px</text>
<text class="d" x="824" y="277.5" style="font-size:9px">H</text>
<rect class="f" x="834.5" y="268.5" width="47" height="11.5"/>
<text class="w" x="837" y="277.5" style="font-size:9px">170,62 px</text>
<text class="dd" x="890" y="277.5" style="font-size:9px">Y</text>
<rect x="899.5" y="268.5" width="47" height="11.5" fill="#2b2b2b" stroke="#3c3c3c"/>
<text class="dd" x="902" y="277.5" style="font-size:9px">424,16 px</text>
<rect x="803" y="260" width="5" height="5" rx="2" fill="none" stroke="#c4c4c4"/><rect x="803" y="265" width="5" height="5" rx="2" fill="none" stroke="#c4c4c4"/><path d="M805.5 263V267" stroke="#c4c4c4"/>
<path d="M819 299.5H829L826 291ZM819.5 299.5L825 295" class="id" style="stroke:#a8a8a8"/>
<rect x="833.5" y="290" width="46" height="12" fill="#2b2b2b" stroke="#3c3c3c"/><path d="M869.5 290V302" stroke="#3c3c3c"/>
<text class="dd" x="836" y="299.5" style="font-size:9px">0,00°</text><use href="#c" x="874.5" y="296"/>
<path d="M904 292L908 296L904 300ZM915 292L911 296L915 300Z" class="id" style="stroke:#9a9a9a"/><path d="M909.5 291V301" stroke="#9a9a9a"/>
<path d="M932 291H941L936.5 295ZM932 301H941L936.5 297Z" fill="#9a9a9a"/><path d="M931 296H942" stroke="#9a9a9a"/>
<use href="#c" x="798.5" y="328"/>
<text x="806" y="331" style="font-size:9px;fill:#c8c8c8;stroke:#c8c8c8;stroke-width:.25px">Character</text>
<rect class="f" x="796.5" y="338.5" width="138" height="14"/><rect class="s" x="934.5" y="338.5" width="10" height="14"/><use href="#c" x="939.5" y="346"/>
<rect x="790" y="349" width="196" height="20" fill="#323232"/>
<rect x="790" y="369" width="208" height="2" fill="#232323"/>
<!-- layers -->
<rect x="790" y="371" width="208" height="21" fill="#282828"/>
<rect x="790" y="371" width="40" height="21" fill="#323232"/>
<text class="tw" x="797" y="384">Layers</text>
<text class="td" x="837" y="384">Channels</text>
<text class="td" x="889" y="384">Paths</text>
<path d="M985 379H992M985 381H992M985 383H992" stroke="#666" stroke-width="1.2"/>
<rect x="793" y="400.5" width="67" height="12" rx="1" fill="#2b2b2b" stroke="#3a3a3a"/>
<circle cx="802.5" cy="405.5" r="2.7" fill="none" stroke="#8a8a8a"/><path d="M804.5 407.5L806.5 409.5" stroke="#8a8a8a"/>
<text class="d" x="809.5" y="409.5" style="font-size:8.5px">Kind</text><use href="#c" x="855" y="407"/>
<rect x="870.5" y="403" width="9.5" height="8" fill="none" stroke="#8f8f8f"/><path d="M872 409L875 406L878 409" stroke="#8f8f8f" fill="none"/>
<circle cx="894" cy="407" r="4" fill="#8f8f8f"/>
<text x="909" y="411.5" style="font-size:11px;font-weight:bold;fill:#8f8f8f;font-family:'Liberation Serif',serif">T</text>
<rect x="928" y="403.5" width="7" height="7" fill="none" stroke="#8f8f8f" stroke-width="1.3"/><rect x="946" y="404" width="8" height="7.5" fill="#8f8f8f"/>
<rect x="964" y="404" width="7" height="13" rx="3.5" fill="#262626"/><circle cx="967.5" cy="402" r="3.5" fill="#7a7a7a"/>
<rect x="792.5" y="421" width="102" height="14" rx="1" fill="#2a2a2a" stroke="#444"/>
<text class="w" x="798" y="431.5" style="font-size:9px" textLength="27">Normal</text><use href="#c" x="889" y="429"/>
<text class="d" x="898" y="431" style="font-size:9px" textLength="31">Opacity:</text>
<rect class="f" x="930.5" y="421" width="30" height="14"/><rect class="s" x="960.5" y="421" width="10" height="14"/><use href="#c" x="965" y="429"/>
<text class="w" x="933" y="431.5" style="font-size:9px">100%</text>
<text class="dd" x="794" y="452.5" style="font-size:9px" textLength="19">Lock:</text>
<rect x="819" y="445" width="8.5" height="8.5" fill="#8a8a8a"/><path d="M821 445V453.5M823.5 445V453.5M819 447.5H827.5M819 450H827.5" stroke="#444"/>
<path d="M836 455L843 446L845 447.5L839 455.5Z" fill="#8f8f8f"/>
<path d="M857 444V454M852 449H862" class="id"/><path d="M855.5 445.5L857 444L858.5 445.5M855.5 452.5L857 454L858.5 452.5M853.5 447.5L852 449L853.5 450.5M860.5 447.5L862 449L860.5 450.5" class="id" style="stroke-width:1"/>
<path d="M871 446H879V454H871ZM869 448H881M876 444V456" class="id" style="stroke-width:1"/>
<rect x="888.5" y="449" width="8" height="6.5" fill="#8f8f8f"/><path d="M890 449V447A2.5 2.5 0 0 1 895 447V449" class="id"/>
<text class="d" x="915" y="452.5" style="font-size:9px" textLength="13">Fill:</text>
<rect class="f" x="930.5" y="443" width="30" height="13.5"/><rect class="s" x="960.5" y="443" width="10" height="13.5"/><use href="#c" x="965" y="450.5"/>
<text class="w" x="933" y="453" style="font-size:9px">100%</text>
<path d="M790 462.5H986" stroke="#262626"/>
<!-- layer rows -->
<path d="M813.5 463V604" stroke="#282828"/>
<path d="M790 490.5H985M790 551.5H985M790 571.5H985" stroke="#282828"/>
<use href="#eye" x="801.5" y="475" stroke="#7e7e7e"/>
<path d="M860 473V478L863 475.5" class="i" style="stroke-width:1"/>
<rect x="870.5" y="463" width="2.5" height="12" fill="#eee"/>
<rect x="866" y="476" width="11" height="12" rx="1" fill="#1c1c1c" stroke="#666"/><rect x="869" y="479" width="4" height="4" fill="#ddd"/><rect x="871" y="482" width="4" height="4" fill="#fff"/>
<text x="883" y="478" style="font-size:8.6px;fill:#c4c4c4" textLength="73">Black Glitter copy 3</text>
<use href="#eye" x="801.5" y="507" stroke="#7e7e7e"/>
<text x="860" y="514" style="font-size:16px;fill:#ddd;font-family:'Liberation Serif',serif">T</text>
<text x="885" y="510" style="font-size:8px;fill:#c8c8c8;text-decoration:underline" textLength="33">HOW TO</text>
<text x="965" y="510" style="font-size:11px;fill:#c8c8c8;font-style:italic;font-family:'Liberation Serif',serif">fx</text>
<rect x="977" y="491" width="8.5" height="32" fill="#282828"/>
<path d="M979 508L981.5 505.5L984 508" class="id"/>
<use href="#eye" x="871" y="530" stroke="#7e7e7e"/>
<text x="880" y="531" style="font-size:8.5px;fill:#b0b0b0" textLength="26">Effects</text>
<text x="893" y="546" style="font-size:8.5px;fill:#b0b0b0" textLength="24">Stroke</text>
<use href="#eye" x="801.5" y="562" stroke="#e4e4e4"/>
<use href="#c" x="831.5" y="561.5"/>
<path d="M838.5 556H843L844 558H849.5V566H838.5Z" fill="#c4c4c4"/><path d="M838.5 559H849.5" stroke="#323232"/>
<text x="858" y="566" style="font-size:9px;fill:#c4c4c4" textLength="15">Text</text>
<rect x="814" y="572" width="171" height="31" fill="#505050"/>
<use href="#eye" x="801.5" y="588" stroke="#e8e8e8"/>
<path d="M840 581V575H848M860 575H868V581M840 596V602H848M860 602H868V596" fill="none" stroke="#e4e4e4" stroke-width="1.2"/>
<text x="848" y="595.5" style="font-size:16px;fill:#e8e8e8;font-family:'Liberation Serif',serif">T</text>
<text x="873" y="591" style="font-size:8.5px;fill:#dadada" textLength="93" lengthAdjust="spacingAndGlyphs">SAFELY REM...R FALSIES</text>
<rect x="986" y="462" width="12" height="142" fill="#282828"/>
<rect x="988" y="551" width="8" height="16" rx="4" fill="#4d4d4d"/>
<!-- layers footer -->
<rect x="790" y="603" width="208" height="21" fill="#323232"/>
<path d="M842 611H846M840 613.5A2.5 2.5 0 0 1 842.5 611M840 613.5A2.5 2.5 0 0 0 842.5 616H845M847 611H848.5A2.5 2.5 0 0 1 848.5 616H846" class="id" style="stroke:#6f6f6f"/>
<text x="862" y="617" style="font-size:11px;fill:#7a7a7a;font-style:italic;font-family:'Liberation Serif',serif">fx</text>
<rect x="881" y="609" width="10" height="8" fill="#8a8a8a"/><circle cx="886" cy="613" r="2.5" fill="#323232"/>
<circle cx="908" cy="613" r="4" fill="#8a8a8a"/>
<path d="M924 608H928L929 610H934V617H924Z" fill="#8a8a8a"/>
<rect x="946" y="609" width="9" height="8.5" fill="none" stroke="#8a8a8a"/><path d="M950.5 611V616M948 613.5H953" stroke="#8a8a8a"/>
<path d="M967 610H975M968 611V618.5H974V611M969.5 608.5H972.5" fill="none" stroke="#7a7a7a" stroke-width="1.2"/>

<!-- Character floating panel -->
<rect x="582" y="134" width="175" height="182" rx="2" fill="#323232" stroke="#1a1a1a"/>
<rect x="583" y="135" width="173" height="22" fill="#282828"/>
<rect x="583" y="135" width="52" height="22" fill="#323232"/>
<text class="tw" x="589.5" y="150">Character</text>
<text class="td" x="642.5" y="150">Paragraph</text>
<text class="b" x="726" y="151" style="font-size:10px;fill:#aeaeae">››</text>
<path d="M739.5 144V152" stroke="#777"/>
<path d="M745 145H753M745 147.5H753M745 150H753" stroke="#777" stroke-width="1.2"/>
<rect class="f" x="586" y="168.5" width="85" height="13.5"/><rect class="s" x="671" y="168.5" width="11" height="13.5"/><use href="#c" x="676.5" y="176"/>
<rect x="588" y="171" width="43" height="10" fill="#c9c9c9"/>
<text x="589" y="179" style="font-size:9px;fill:#111" textLength="41">Montserrat</text>
<rect class="f" x="690" y="168.5" width="52" height="13.5"/><rect class="s" x="742" y="168.5" width="11" height="13.5"/><use href="#c" x="747.5" y="176"/>
<text x="693" y="179" style="font-size:9px;fill:#c8c8c8" textLength="36">SemiBold</text>
<!-- row 2 -->
<text x="590" y="201" style="font-size:14px;fill:#d0d0d0;font-family:'Liberation Serif',serif;font-weight:bold">T</text><text x="586" y="201" style="font-size:7px;fill:#d0d0d0;font-family:'Liberation Serif',serif">T</text>
<rect class="f" x="602" y="189" width="54" height="12.5"/><rect class="s" x="656" y="189" width="10" height="12.5"/><use href="#c" x="661" y="196"/>
<text x="605" y="198.5" style="font-size:9px;fill:#c8c8c8" textLength="32">80,03 pt</text>
<text x="681" y="195" style="font-size:8px;fill:#b8b8b8">A</text><text x="681" y="202" style="font-size:8px;fill:#b8b8b8">A</text><path d="M678.5 192V201M677 193.5L678.5 192L680 193.5M677 199.5L678.5 201L680 199.5" class="i" style="stroke-width:.9"/>
<rect class="f" x="693" y="189" width="49" height="12.5"/><rect class="s" x="742" y="189" width="11" height="12.5"/><use href="#c" x="747.5" y="196"/>
<!-- row 3 -->
<text x="585.5" y="214" style="font-size:10px;fill:#c4c4c4">V/A</text><path d="M592 216.5H600M594 215L592 216.5L594 218" class="i" style="stroke-width:.8"/>
<rect class="f" x="602" y="205" width="54" height="12.5"/><rect class="s" x="656" y="205" width="10" height="12.5"/><use href="#c" x="661" y="212"/>
<text x="605" y="214.5" style="font-size:9px;fill:#c8c8c8" textLength="29">Metrics</text>
<rect x="678" y="205" width="13" height="10" fill="#c8c8c8"/><text x="678.5" y="213.5" style="font-size:9px;font-weight:bold;fill:#222" textLength="12">VA</text><path d="M678 218H691M680 216.5L678 218L680 219.5M689 216.5L691 218L689 219.5" class="i" style="stroke-width:.8"/>
<rect class="f" x="693" y="205" width="49" height="12.5"/><rect class="s" x="742" y="205" width="11" height="12.5"/><use href="#c" x="747.5" y="212"/>
<text x="696" y="214.5" style="font-size:9px;fill:#c8c8c8">75</text>
<!-- row 4 -->
<text x="590" y="234" style="font-size:14px;fill:#d0d0d0;font-family:'Liberation Serif',serif;font-weight:bold">T</text><path d="M587 223V233M585.5 224.5L587 223L588.5 224.5M585.5 231.5L587 233L588.5 231.5" class="i" style="stroke-width:.9"/>
<rect class="f" x="603" y="222.5" width="41" height="11"/><text x="605.5" y="231" style="font-size:9px;fill:#c8c8c8">100%</text>
<text x="697" y="232" style="font-size:13px;fill:#d0d0d0;font-family:'Liberation Serif',serif;font-weight:bold">T</text><path d="M696 235.5H708M698 234L696 235.5L698 237M706 234L708 235.5L706 237" class="i" style="stroke-width:.9"/>
<rect class="f" x="711" y="222.5" width="42" height="11"/><text x="713.5" y="231" style="font-size:9px;fill:#c8c8c8">100%</text>
<!-- row 5 -->
<text x="586" y="248" style="font-size:10px;fill:#c4c4c4">A</text><text x="593" y="244" style="font-size:6px;fill:#c4c4c4">a</text><path d="M585.5 250H592M596 245V250" class="i" style="stroke-width:.9"/>
<rect class="f" x="603" y="238.5" width="42" height="12"/><text x="605.5" y="248" style="font-size:9px;fill:#c8c8c8">0 pt</text>
<text class="d" x="685" y="248" style="font-size:9px" textLength="22">Color:</text>
<rect x="711" y="237" width="43" height="15" fill="#000" stroke="#3c3c3c"/>
<!-- styles row -->
<rect x="633.5" y="254.5" width="17" height="17" rx="1" fill="#232323"/>
<text x="599" y="268" style="font-size:13px;font-weight:bold;fill:#c8c8c8;font-family:'Liberation Serif',serif">T</text>
<text x="618" y="268" style="font-size:13px;font-style:italic;fill:#b8b8b8;font-family:'Liberation Serif',serif">T</text>
<text x="635" y="268" style="font-size:12px;fill:#d0d0d0;font-family:'Liberation Serif',serif" textLength="14">TT</text>
<text x="654" y="268" style="font-size:12px;fill:#b8b8b8;font-family:'Liberation Serif',serif">T<tspan style="font-size:8px">T</tspan></text>
<text x="673" y="268" style="font-size:12px;fill:#b8b8b8;font-family:'Liberation Serif',serif">T<tspan style="font-size:6px" dy="-5">1</tspan></text>
<text x="692" y="268" style="font-size:12px;fill:#b8b8b8;font-family:'Liberation Serif',serif">T<tspan style="font-size:6px">1</tspan></text>
<text x="711" y="267" style="font-size:12px;fill:#b8b8b8;font-family:'Liberation Serif',serif">T</text><path d="M710.5 270H721" stroke="#b8b8b8"/>
<text x="730" y="268" style="font-size:12px;fill:#b8b8b8;font-family:'Liberation Serif',serif">T</text><path d="M728 263.5H742" stroke="#b8b8b8"/>
<rect x="596" y="276" width="17" height="17" rx="1" fill="#232323"/>
<text x="599" y="290" style="font-size:14px;fill:#dcdcdc;font-family:'Liberation Serif',serif">fi</text>
<text x="618" y="290" style="font-size:12px;font-style:italic;fill:#6e6e6e;font-family:'Liberation Serif',serif">ơ</text>
<text x="636" y="290" style="font-size:12px;fill:#b8b8b8;font-family:'Liberation Serif',serif">st</text>
<text x="655" y="290" style="font-size:13px;font-style:italic;fill:#6e6e6e;font-family:'Liberation Serif',serif">A</text>
<text x="673" y="290" style="font-size:12px;fill:#b8b8b8;font-family:'Liberation Serif',serif">aa</text><path d="M673 279H685M683 277.5L685 279L683 280.5" stroke="#b8b8b8" fill="none" stroke-width=".9"/>
<text x="694" y="290" style="font-size:13px;fill:#5e5e5e;font-family:'Liberation Serif',serif">T</text>
<text x="711" y="290" style="font-size:13px;fill:#b8b8b8;font-family:'Liberation Serif',serif">1<tspan style="font-size:7px" dy="-5">st</tspan></text>
<text x="729" y="290" style="font-size:13px;fill:#b8b8b8;font-family:'Liberation Serif',serif">½</text>
<!-- bottom -->
<rect class="f" x="586" y="297.5" width="96" height="14.5" rx="1"/><use href="#c" x="677" y="305.5"/>
<text x="592" y="308" style="font-size:8.8px;fill:#c8c8c8">English: USA</text>
<text x="687" y="303" style="font-size:8px;fill:#b8b8b8">a</text><text x="691.5" y="305" style="font-size:10px;fill:#b8b8b8">a</text>
<rect class="f" x="702" y="297.5" width="51.5" height="14.5" rx="1"/><use href="#c" x="748" y="305.5"/>
<text x="707" y="308" style="font-size:9px;fill:#c8c8c8">Smooth</text>
</svg>
</body></html>
